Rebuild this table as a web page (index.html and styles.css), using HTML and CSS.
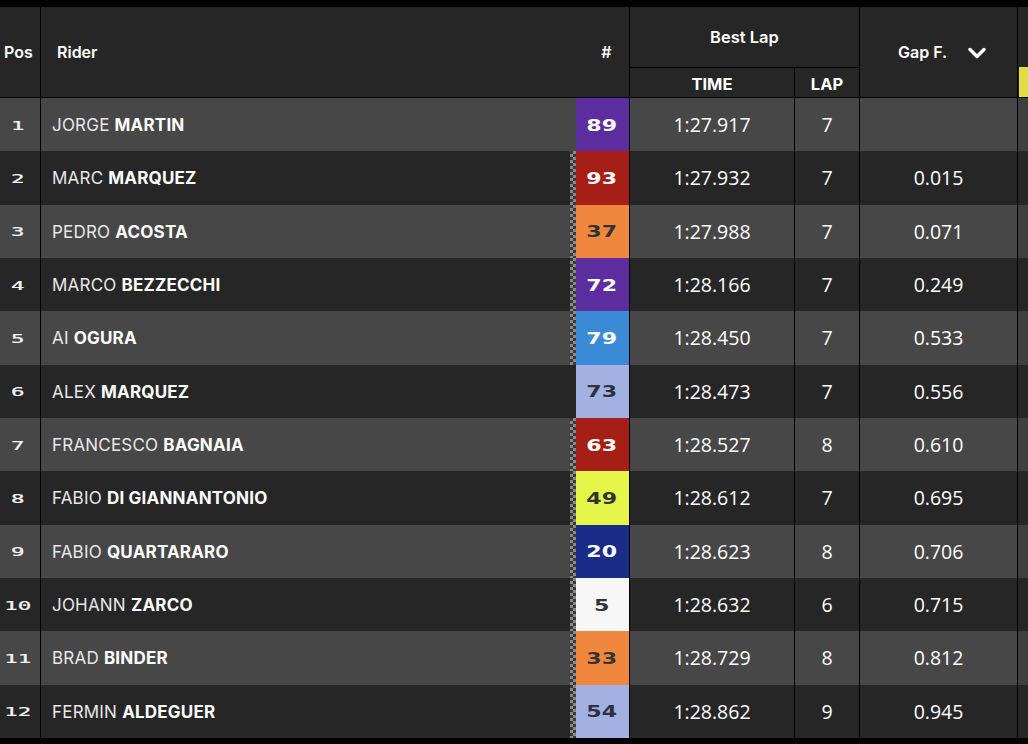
FILE: index.html
```html
<!DOCTYPE html>
<html lang="en">
<head>
<meta charset="utf-8">
<title>Best Lap</title>
<link rel="stylesheet" href="styles.css">
</head>
<body>
<div class="board">
  <div class="head">
    <div class="c pos hcell">Pos</div>
    <div class="c rider hcell rider-h">Rider</div>
    <div class="c num hcell num-h">#</div>
    <div class="best">
      <div class="best-top">Best Lap</div>
      <div class="best-sub">
        <div class="time sub">TIME</div>
        <div class="lap sub">LAP</div>
      </div>
    </div>
    <div class="c gap hcell gap-h">
      <span>Gap F.</span>
      <svg class="chev" width="18" height="12" viewBox="0 0 18 12"><path d="M2 2.5 L9 9.5 L16 2.5" fill="none" stroke="#fff" stroke-width="3.4" stroke-linecap="round" stroke-linejoin="round"/></svg>
    </div>
    <div class="extra extra-h"><div class="flag"></div></div>
  </div>

  <div class="row light">
    <div class="c pos"><span class="pn">1</span></div>
    <div class="c rider"><span class="fn">JORGE</span> <b>MARTIN</b></div>
    <div class="c num purple"><span class="bn">89</span></div>
    <div class="c time">1:27.917</div>
    <div class="c lap">7</div>
    <div class="c gap"></div>
    <div class="extra"></div>
  </div>
  <div class="row dark chk">
    <div class="c pos"><span class="pn">2</span></div>
    <div class="c rider"><span class="fn">MARC</span> <b>MARQUEZ</b></div>
    <div class="c num red"><span class="bn">93</span></div>
    <div class="c time">1:27.932</div>
    <div class="c lap">7</div>
    <div class="c gap">0.015</div>
    <div class="extra"></div>
  </div>
  <div class="row light chk">
    <div class="c pos"><span class="pn">3</span></div>
    <div class="c rider"><span class="fn">PEDRO</span> <b>ACOSTA</b></div>
    <div class="c num orange"><span class="bn">37</span></div>
    <div class="c time">1:27.988</div>
    <div class="c lap">7</div>
    <div class="c gap">0.071</div>
    <div class="extra"></div>
  </div>
  <div class="row dark chk">
    <div class="c pos"><span class="pn">4</span></div>
    <div class="c rider"><span class="fn">MARCO</span> <b>BEZZECCHI</b></div>
    <div class="c num purple"><span class="bn">72</span></div>
    <div class="c time">1:28.166</div>
    <div class="c lap">7</div>
    <div class="c gap">0.249</div>
    <div class="extra"></div>
  </div>
  <div class="row light chk">
    <div class="c pos"><span class="pn">5</span></div>
    <div class="c rider"><span class="fn">AI</span> <b>OGURA</b></div>
    <div class="c num blue"><span class="bn">79</span></div>
    <div class="c time">1:28.450</div>
    <div class="c lap">7</div>
    <div class="c gap">0.533</div>
    <div class="extra"></div>
  </div>
  <div class="row dark">
    <div class="c pos"><span class="pn">6</span></div>
    <div class="c rider"><span class="fn">ALEX</span> <b>MARQUEZ</b></div>
    <div class="c num lav"><span class="bn">73</span></div>
    <div class="c time">1:28.473</div>
    <div class="c lap">7</div>
    <div class="c gap">0.556</div>
    <div class="extra"></div>
  </div>
  <div class="row light chk">
    <div class="c pos"><span class="pn">7</span></div>
    <div class="c rider"><span class="fn">FRANCESCO</span> <b>BAGNAIA</b></div>
    <div class="c num red"><span class="bn">63</span></div>
    <div class="c time">1:28.527</div>
    <div class="c lap">8</div>
    <div class="c gap">0.610</div>
    <div class="extra"></div>
  </div>
  <div class="row dark chk">
    <div class="c pos"><span class="pn">8</span></div>
    <div class="c rider"><span class="fn">FABIO</span> <b>DI GIANNANTONIO</b></div>
    <div class="c num lime"><span class="bn">49</span></div>
    <div class="c time">1:28.612</div>
    <div class="c lap">7</div>
    <div class="c gap">0.695</div>
    <div class="extra"></div>
  </div>
  <div class="row light chk">
    <div class="c pos"><span class="pn">9</span></div>
    <div class="c rider"><span class="fn">FABIO</span> <b>QUARTARARO</b></div>
    <div class="c num navy"><span class="bn">20</span></div>
    <div class="c time">1:28.623</div>
    <div class="c lap">8</div>
    <div class="c gap">0.706</div>
    <div class="extra"></div>
  </div>
  <div class="row dark chk">
    <div class="c pos"><span class="pn">10</span></div>
    <div class="c rider"><span class="fn">JOHANN</span> <b>ZARCO</b></div>
    <div class="c num white"><span class="bn">5</span></div>
    <div class="c time">1:28.632</div>
    <div class="c lap">6</div>
    <div class="c gap">0.715</div>
    <div class="extra"></div>
  </div>
  <div class="row light chk">
    <div class="c pos"><span class="pn">11</span></div>
    <div class="c rider"><span class="fn">BRAD</span> <b>BINDER</b></div>
    <div class="c num orange"><span class="bn">33</span></div>
    <div class="c time">1:28.729</div>
    <div class="c lap">8</div>
    <div class="c gap">0.812</div>
    <div class="extra"></div>
  </div>
  <div class="row dark chk">
    <div class="c pos"><span class="pn">12</span></div>
    <div class="c rider"><span class="fn">FERMIN</span> <b>ALDEGUER</b></div>
    <div class="c num lav"><span class="bn">54</span></div>
    <div class="c time">1:28.862</div>
    <div class="c lap">9</div>
    <div class="c gap">0.945</div>
    <div class="extra"></div>
  </div>
</div>
</body>
</html>
```
FILE: styles.css
```css
html, body {
  margin: 0;
  padding: 0;
  background: #000;
}
body {
  width: 1028px;
  height: 744px;
  overflow: hidden;
  font-family: Inter, "Liberation Sans", sans-serif;
  color: #fff;
}
.board {
  padding-top: 7px;
  display: flex;
  flex-direction: column;
}
.head {
  display: flex;
  height: 91px;
  background: #262626;
  border-bottom: 1px solid #000;
  box-sizing: border-box;
}
.c {
  box-sizing: border-box;
  display: flex;
  align-items: center;
  justify-content: center;
  border-right: 1px solid #000;
  flex: none;
}
.pos { width: 41px; }
.rider { width: 535px; border-right: none; justify-content: flex-start; padding-left: 11px; position: relative; }
.num { width: 54px; }
.time { width: 165px; }
.lap { width: 65px; }
.gap { width: 158px; }
.extra { width: 10px; flex: none; }

.hcell {
  font-size: 16px;
  font-weight: 600;
}
.head .pos { justify-content: flex-start; padding-left: 4px; }
.rider-h { padding-left: 16px; }
.num-h { padding-left: 8px; }
.best {
  width: 230px;
  display: flex;
  flex-direction: column;
  border-right: 1px solid #000;
  box-sizing: border-box;
  flex: none;
}
.best-top {
  height: 61px;
  border-bottom: 1px solid #000;
  box-sizing: border-box;
  display: flex;
  align-items: center;
  justify-content: center;
  font-size: 16.5px;
  font-weight: 600;
}
.best-sub {
  display: flex;
  flex: 1;
}
.sub {
  box-sizing: border-box;
  display: flex;
  align-items: center;
  justify-content: center;
  font-size: 16.5px;
  font-weight: 700;
  padding-top: 2px;
}
.best-sub .time { width: 165px; border-right: 1px solid #000; }
.best-sub .lap { width: 64px; }
.gap-h { justify-content: flex-start; padding-left: 38px; font-size: 16px; }
.chev { margin-left: 21px; margin-top: 1px; }
.extra-h {
  display: flex;
  flex-direction: column;
  justify-content: flex-end;
}
.flag {
  height: 30px;
  margin-left: 1px;
  background: #e3dc4a;
}

.row {
  display: flex;
  height: 53.333px;
  font-family: "Open Sans", Inter, sans-serif;
  font-size: 19.5px;
}
.row.light { background: #474747; }
.row.dark { background: #262626; }
.row.light .extra { background: #3f3f3f; }
.row.dark .extra { background: #262626; }

.row .pos { padding-right: 5px; padding-top: 1px; }
.pn {
  display: inline-block;
  font-family: "DejaVu Sans Mono", monospace;
  font-weight: 400;
  font-size: 16px;
  transform: scale(1.4, 0.8);
  color: #f4f4f4;
  -webkit-text-stroke: 0.3px #f4f4f4;
}
.row .rider { font-family: Inter, sans-serif; font-size: 17px; letter-spacing: 0.2px; padding-top: 1px; }
.fn { color: #e8e8e8; font-weight: 400; }
.rider b { font-weight: 700; margin-left: 5px; color: #fff; }

.chk .rider::after {
  content: "";
  position: absolute;
  right: 0;
  top: 0;
  bottom: 0;
  width: 6px;
  background: repeating-conic-gradient(#8a8a8a 0 25%, #3a3a3a 0 50%) 0 0 / 6px 6px;
}

.bn {
  display: inline-block;
  font-family: "DejaVu Sans", sans-serif;
  font-weight: 700;
  font-size: 17px;
  transform: scale(1.3, 0.95);
  padding-right: 1px;
}
.purple { background: #5b2d9f; color: #fff; }
.red { background: #a61f16; color: #fff; }
.orange { background: #f0873f; color: #333; }
.blue { background: #3b8ad6; color: #fff; }
.lav { background: #a2b0e2; color: #2e3040; }
.lime { background: #e6f549; color: #333; }
.navy { background: #1a2c87; color: #fff; }
.white { background: #f7f7f7; color: #333; }
```
